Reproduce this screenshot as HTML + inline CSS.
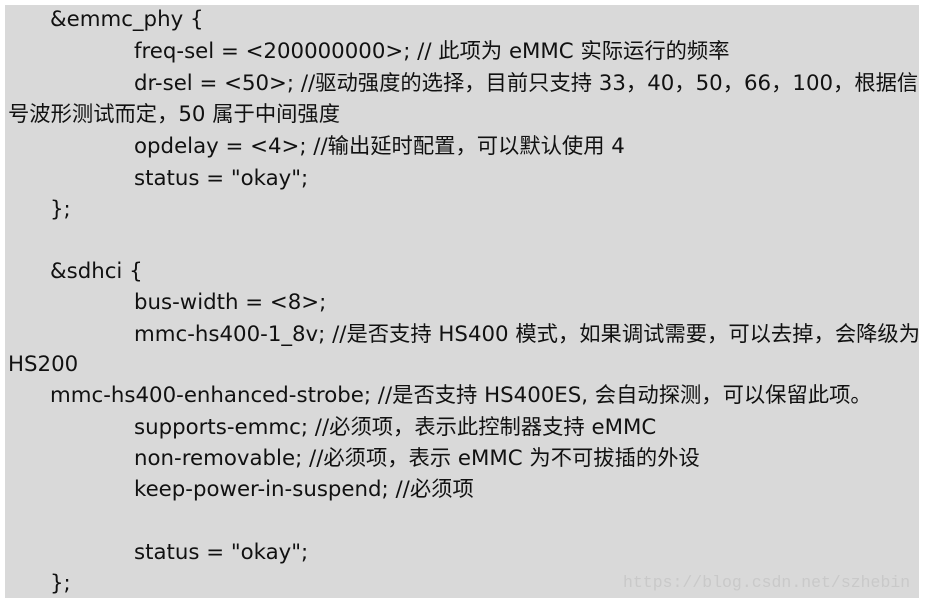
<!DOCTYPE html>
<html><head><meta charset="utf-8"><style>
html,body{margin:0;padding:0;background:#fff;width:925px;height:605px;overflow:hidden}
.box{position:absolute;left:5px;top:5px;width:914px;height:593px;background:#d9d9d9}
.l{position:absolute;white-space:nowrap;font-family:"DejaVu Sans","Noto Sans CJK SC",sans-serif;font-size:21.3px;color:#111;line-height:24px}
.wm{position:absolute;left:623px;top:573px;font-family:"Liberation Mono","DejaVu Sans Mono",monospace;font-size:16.5px;color:#c9c9c9;white-space:nowrap}
</style></head><body>
<div class="box"></div>
<div class="l" style="left:50px;top:8px">&amp;emmc_phy {</div>
<div class="l" style="left:134px;top:40px">freq-sel = &lt;200000000&gt;; // 此项为 eMMC 实际运行的频率</div>
<div class="l" style="left:134px;top:72px">dr-sel = &lt;50&gt;; //驱动强度的选择，目前只支持 33，40，50，66，100，根据信</div>
<div class="l" style="left:8px;top:103px">号波形测试而定，50 属于中间强度</div>
<div class="l" style="left:134px;top:135px">opdelay = &lt;4&gt;; //输出延时配置，可以默认使用 4</div>
<div class="l" style="left:134px;top:167px">status = "okay";</div>
<div class="l" style="left:50px;top:198px">};</div>
<div class="l" style="left:50px;top:260px">&amp;sdhci {</div>
<div class="l" style="left:134px;top:291px">bus-width = &lt;8&gt;;</div>
<div class="l" style="left:134px;top:323px">mmc-hs400-1_8v; //是否支持 HS400 模式，如果调试需要，可以去掉，会降级为</div>
<div class="l" style="left:8px;top:353px">HS200</div>
<div class="l" style="left:50px;top:384px">mmc-hs400-enhanced-strobe; //是否支持 HS400ES, 会自动探测，可以保留此项。</div>
<div class="l" style="left:134px;top:416px">supports-emmc; //必须项，表示此控制器支持 eMMC</div>
<div class="l" style="left:134px;top:447px">non-removable; //必须项，表示 eMMC 为不可拔插的外设</div>
<div class="l" style="left:134px;top:478px">keep-power-in-suspend; //必须项</div>
<div class="l" style="left:134px;top:541px">status = "okay";</div>
<div class="l" style="left:50px;top:572px">};</div>
<div class="wm">https://blog.csdn.net/szhebin</div>
</body></html>
